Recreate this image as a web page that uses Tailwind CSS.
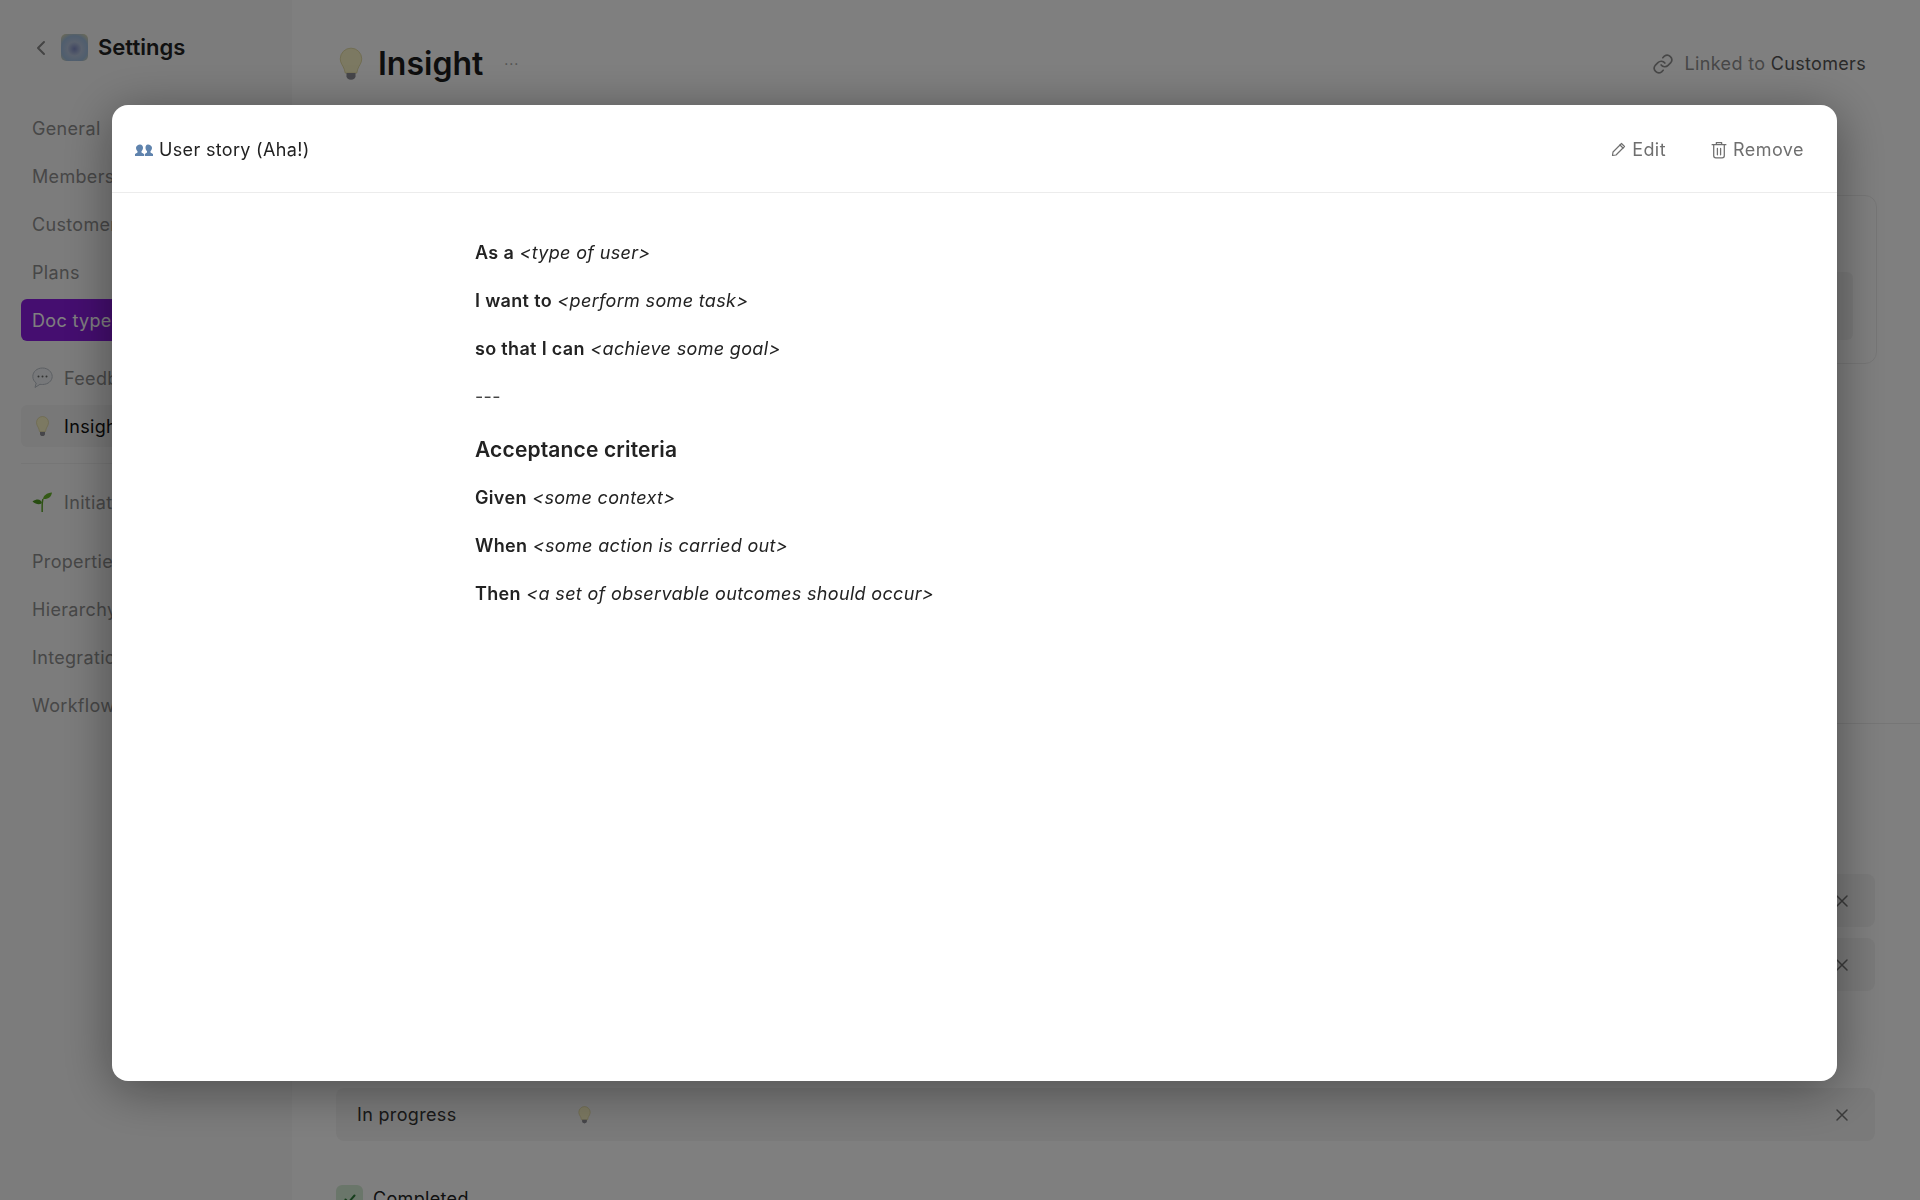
<!DOCTYPE html>
<html lang="en">
<head>
  <meta charset="UTF-8">
  <title>Settings - Doc types</title>
  <script src="https://cdn.jsdelivr.net/npm/@tailwindcss/browser@4"></script>
</head>
<body class="bg-white font-['Inter','Noto_Sans',sans-serif] text-[18px] tracking-[0.33px] text-[#222]">

  <!-- page behind the modal -->
  <div class="flex h-[1200px] w-[1920px] overflow-hidden">
    <aside class="w-[292px] shrink-0 border-r border-[#f8f8f8] bg-[#f9f9f9] px-[21px]">
      <div class="flex h-[95px] items-center pl-[12px]">
        <svg class="mr-[14px] h-[20px] w-[14px]" viewBox="0 0 14 20" fill="none" stroke="#888" stroke-width="2" stroke-linecap="round" stroke-linejoin="round"><path d="M11 4 5 10l6 6"/></svg>
        <div class="mr-[10px] h-[27px] w-[27px] rounded-[5px] bg-[radial-gradient(circle_at_50%_55%,#7f8cc4_0%,#b5c4dc_35%,#9fbcdc_65%,#e9dda0_100%)]"></div>
        <span class="text-[22px] font-semibold tracking-normal text-[#222]">Settings</span>
      </div>
      <nav class="text-[#8f8f8f]">
        <a class="mt-[12px] flex h-[42px] items-center px-[11px]">General</a>
        <a class="mt-[6px] flex h-[42px] items-center px-[11px]">Members</a>
        <a class="mt-[6px] flex h-[42px] items-center px-[11px]">Customers</a>
        <a class="mt-[6px] flex h-[42px] items-center px-[11px]">Plans</a>
        <a class="mt-[6px] flex h-[42px] items-center rounded-[6px] bg-[#8a1ce0] px-[11px] text-white">Doc types</a>
        <a class="mt-[16px] flex h-[42px] items-center gap-[11px] px-[11px]">
          <svg class="h-[22px] w-[21px]" viewBox="0 0 21 22"><path d="M10.500 1C5 1 .8 4.700.8 9.500c0 2.700 1.300 5 3.400 6.500L3 20.500l5-3.200c.8.200 1.600.200 2.500.200 5.500 0 9.700-3.600 9.700-8S16 1 10.500 1Z" fill="#eef1f4" stroke="#b8bec6"/><circle cx="6.500" cy="9.500" r="1" fill="#666"/><circle cx="10.500" cy="9.500" r="1" fill="#666"/><circle cx="14.500" cy="9.500" r="1" fill="#666"/></svg>
          Feedback</a>
        <a class="mt-[6px] flex h-[42px] items-center gap-[11px] rounded-[6px] bg-[#f0f0f0] px-[11px] text-[#111]">
          <svg class="h-[22px] w-[21px]" viewBox="0 0 21 22"><path d="M10.500 1.500a6 6 0 0 0-6 6c0 2.800 1.700 4.200 2.400 6.500.3.900.5 1.700.6 2.500h6c.1-.8.300-1.600.6-2.500.7-2.300 2.400-3.700 2.400-6.500a6 6 0 0 0-6-6Z" fill="#f8f2c4" stroke="#d6cd8c" stroke-width=".6"/><path d="M8 17h5v2.300c0 .8-1 1.800-2.500 1.800S8 20.100 8 19.300Z" fill="#8d8d94"/></svg>
          Insight</a>
        <div class="mt-[16px] border-t border-[#ececec]"></div>
        <a class="mt-[17px] flex h-[42px] items-center gap-[11px] px-[11px]">
          <svg class="h-[22px] w-[21px]" viewBox="0 0 21 22"><path d="M11 8c.5-3.500 3.500-6 9-6.500-.5 4-3.500 7-9 6.500Z" fill="#69b52c"/><path d="M10 12C9 8.500 5.500 7 .5 10.500 4 13.500 7.500 14 10 12Z" fill="#4f9a22"/><path d="M11 8c-.8 2-1 5-.8 13" fill="none" stroke="#5ca528" stroke-width="1.500"/></svg>
          Initiatives</a>
        <a class="mt-[17px] flex h-[42px] items-center px-[11px]">Properties</a>
        <a class="mt-[6px] flex h-[42px] items-center px-[11px]">Hierarchy</a>
        <a class="mt-[6px] flex h-[42px] items-center px-[11px]">Integrations</a>
        <a class="mt-[6px] flex h-[42px] items-center px-[11px]">Workflows</a>
      </nav>
    </aside>

    <main class="min-w-0 flex-1">
      <div class="flex h-[127px] items-center pl-[47px] pr-[54px]">
        <svg class="mr-[15px] h-[34px] w-[24px]" viewBox="0 0 21 30"><path d="M10.500 1a9.500 9.500 0 0 0-9.500 9.500c0 3.800 2.500 6 3.500 9 .4 1.200.7 2.300.9 3.500h10.200c.2-1.200.5-2.300.9-3.500 1-3 3.500-5.200 3.500-9A9.500 9.500 0 0 0 10.500 1Z" fill="#f8f2c4" stroke="#d6cd8c" stroke-width=".6"/><path d="M6.500 23h8v3c0 1.200-1.700 3-4 3s-4-1.800-4-3Z" fill="#8d8d94"/></svg>
        <h1 class="text-[32px] font-semibold tracking-normal text-[#1c1c1c]">Insight</h1>
        <span class="ml-[21px] text-[14px] tracking-[1px] text-[#999]">···</span>
        <div class="ml-auto flex items-center gap-[11px] text-[#8f8f8f]">
          <svg class="h-[22px] w-[22px]" viewBox="0 0 24 24" fill="none" stroke="#8f8f8f" stroke-width="1.800" stroke-linecap="round" stroke-linejoin="round"><path d="M10 13a5 5 0 0 0 7.500.500l3-3a5 5 0 0 0-7-7l-1.700 1.700"/><path d="M14 11a5 5 0 0 0-7.500-.500l-3 3a5 5 0 0 0 7 7l1.700-1.700"/></svg>
          <span>Linked to <span class="text-[#555]">Customers</span></span>
        </div>
      </div>

      <div class="ml-[44px] mr-[43px] mt-[68px] h-[169px] rounded-[12px] border border-[#ededed] pl-[20px] pr-[23px] pt-[76px]">
        <div class="h-[68px] rounded-[6px] bg-[#f4f4f4]"></div>
      </div>

      <div class="mt-[359px] border-t border-[#ececec] pl-[44px] pr-[45px] pt-[150px]">
        <div class="flex h-[53px] items-center justify-end rounded-[8px] bg-[#f5f5f5] pr-[26px]">
          <svg class="h-[14px] w-[14px]" viewBox="0 0 14 14" fill="none" stroke="#777" stroke-width="1.500" stroke-linecap="round"><path d="m2 2 10 10M12 2 2 12"/></svg>
        </div>
        <div class="mt-[11px] flex h-[53px] items-center justify-end rounded-[8px] bg-[#f5f5f5] pr-[26px]">
          <svg class="h-[14px] w-[14px]" viewBox="0 0 14 14" fill="none" stroke="#777" stroke-width="1.500" stroke-linecap="round"><path d="m2 2 10 10M12 2 2 12"/></svg>
        </div>
        <div class="mt-[97px] flex h-[53px] items-center rounded-[8px] bg-[#f5f5f5] pl-[21px] pr-[26px]">
          <span class="w-[221px] text-[#333]">In progress</span>
          <svg class="h-[18px] w-[13px]" viewBox="0 0 21 30"><path d="M10.500 1a9.500 9.500 0 0 0-9.500 9.500c0 3.800 2.500 6 3.500 9 .4 1.200.7 2.300.9 3.500h10.200c.2-1.200.5-2.300.9-3.500 1-3 3.500-5.200 3.500-9A9.500 9.500 0 0 0 10.500 1Z" fill="#f8f2c4" stroke="#d6cd8c"/><path d="M6.500 23h8v3c0 1.200-1.700 3-4 3s-4-1.800-4-3Z" fill="#8d8d94"/></svg>
          <svg class="ml-auto h-[14px] w-[14px]" viewBox="0 0 14 14" fill="none" stroke="#777" stroke-width="1.500" stroke-linecap="round"><path d="m2 2 10 10M12 2 2 12"/></svg>
        </div>
        <div class="mt-[44px] flex items-center gap-[10px]">
          <div class="flex h-[27px] w-[27px] items-center justify-center rounded-[6px] bg-[#d5ecd5]">
            <svg class="h-[14px] w-[14px]" viewBox="0 0 14 14" fill="none" stroke="#2f7d3a" stroke-width="2" stroke-linecap="round" stroke-linejoin="round"><path d="m2.500 7.500 3 3 6-7"/></svg>
          </div>
          <span class="text-[#222]">Completed</span>
        </div>
      </div>
    </main>
  </div>

  <!-- modal -->
  <div class="fixed inset-0 flex items-start bg-black/50 pl-[112px] pt-[105px]">
    <div class="h-[976px] w-[1725px] overflow-hidden rounded-[16px] bg-white shadow-[0_8px_50px_rgba(0,0,0,0.4)]">
      <div class="flex h-[88px] items-center border-b border-[#ececec] pl-[23px] pr-[33px] pt-[2px]">
        <svg class="mr-[6px] h-[16px] w-[18px]" viewBox="0 0 18 16"><path d="M5 2.500c1.800 0 3 1.400 3 3.300 0 1.500-.7 2.800-1.500 3.500v1.200l2.500 1.500V14H0v-2l2.500-1.500V9.300C1.700 8.600 1 7.300 1 5.800c0-1.900 2.200-3.300 4-3.300Z" fill="#5f83ad"/><path d="M13 2.500c1.800 0 4 1.400 4 3.300 0 1.500-.7 2.800-1.500 3.500v1.200L18 12v2H9.800v-2l2.200-1.500V9.300c-.8-.7-1.500-2-1.500-3.500 0-1.900.7-3.300 2.500-3.300Z" fill="#5f83ad"/></svg>
        <span class="text-[#222]">User story (Aha!)</span>
        <div class="ml-auto flex items-center gap-[45px] tracking-[0.45px] text-[#6f6f6f]">
          <button class="flex items-center gap-[6px]">
            <svg class="h-[15px] w-[15px]" viewBox="0 0 15 15" fill="none" stroke="#6f6f6f" stroke-width="1.200" stroke-linecap="round" stroke-linejoin="round"><path d="M10.500 1.500 13.500 4.500 5 13l-3.500.5L2 10Z"/><path d="m9 3 3 3"/></svg>
            Edit
          </button>
          <button class="flex items-center gap-[6px]">
            <svg class="h-[18px] w-[16px]" viewBox="0 0 15 17" fill="none" stroke="#6f6f6f" stroke-width="1.200" stroke-linecap="round" stroke-linejoin="round"><path d="M1 3.500h13M5 3.500V1.500h5v2M2.500 3.500v10.500c0 1 .8 2 2 2h6c1.200 0 2-1 2-2V3.500M6 7v6M9 7v6"/></svg>
            Remove
          </button>
        </div>
      </div>
      <div class="pl-[363px] pt-[46px] text-[#222]">
        <p class="h-[48px] leading-[27px]"><strong class="font-semibold">As a</strong> <em>&lt;type of user&gt;</em></p>
        <p class="h-[48px] leading-[27px]"><strong class="font-semibold">I want to</strong> <em>&lt;perform some task&gt;</em></p>
        <p class="h-[48px] leading-[27px]"><strong class="font-semibold">so that I can</strong> <em>&lt;achieve some goal&gt;</em></p>
        <p class="h-[48px] leading-[27px] text-[#444]">---</p>
        <h2 class="mb-[19px] mt-[4px] text-[21px] leading-[30px] font-semibold tracking-[0.15px]">Acceptance criteria</h2>
        <p class="h-[48px] leading-[27px]"><strong class="font-semibold">Given</strong> <em>&lt;some context&gt;</em></p>
        <p class="h-[48px] leading-[27px]"><strong class="font-semibold">When</strong> <em>&lt;some action is carried out&gt;</em></p>
        <p class="h-[48px] leading-[27px]"><strong class="font-semibold">Then</strong> <em>&lt;a set of observable outcomes should occur&gt;</em></p>
      </div>
    </div>
  </div>

</body>
</html>
